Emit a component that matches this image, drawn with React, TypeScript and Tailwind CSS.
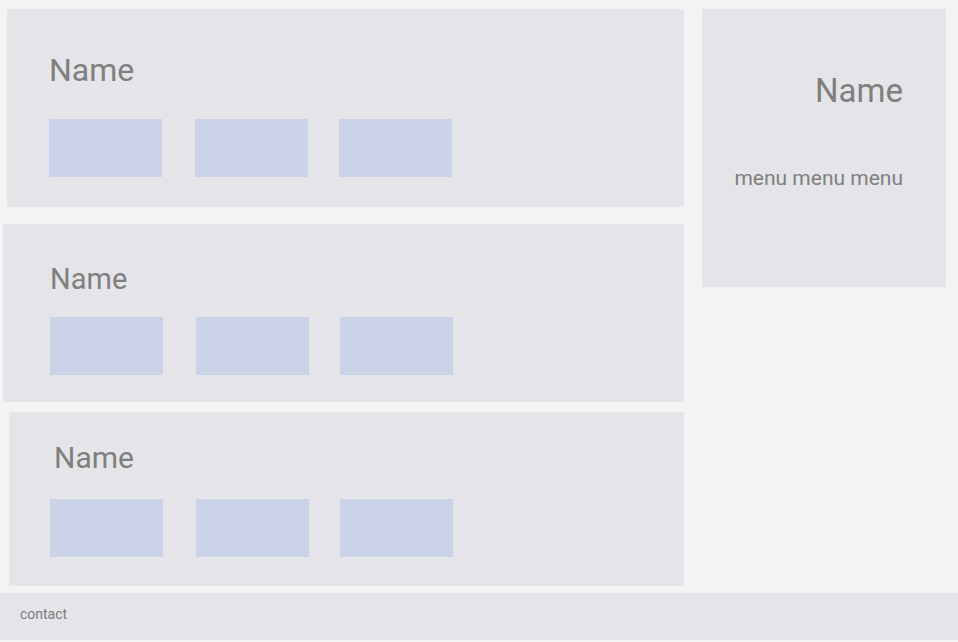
const Boxes = () => (
  <div className="flex">
    <div className="w-[113px] h-[58px] bg-[#c9d2e7]" />
    <div className="w-[113px] h-[58px] bg-[#c9d2e7] ml-[33px]" />
    <div className="w-[113px] h-[58px] bg-[#c9d2e7] ml-[31px]" />
  </div>
);

export default function App() {
  return (
    <div className="h-[642px] bg-[#f3f3f3] flex flex-col font-['Roboto',sans-serif] text-[#7f7f7f]">
      <div className="flex">
        {/* Left column */}
        <div className="flex flex-col">
          <div className="ml-[7px] mt-[9px] w-[677px] h-[198px] bg-[#e5e5e9] pl-[42px] pt-[45px]">
            <h2 className="text-[32px] leading-none">Name</h2>
            <div className="mt-[33px]">
              <Boxes />
            </div>
          </div>

          <div className="ml-[3px] mt-[17px] w-[681px] h-[178px] bg-[#e5e5e9] pl-[47px] pt-[41px]">
            <h2 className="text-[29px] leading-none">Name</h2>
            <div className="mt-[23px]">
              <Boxes />
            </div>
          </div>

          <div className="ml-[9px] mt-[10px] w-[675px] h-[174px] bg-[#e5e5e9] pl-[41px] pt-[31px]">
            <h2 className="text-[30px] leading-none ml-[4px]">Name</h2>
            <div className="mt-[26px]">
              <Boxes />
            </div>
          </div>
        </div>

        {/* Sidebar */}
        <div className="ml-[18px] mt-[9px] w-[244px] h-[278px] bg-[#e5e5e9] pr-[43px] pt-[65px] text-right">
          <h2 className="text-[33px] leading-none">Name</h2>
          <p className="mt-[61px] text-[21px] leading-none">menu menu menu</p>
        </div>
      </div>

      {/* Footer */}
      <div className="mt-[7px] h-[47px] bg-[#e5e5e9] flex items-center pl-[20px] pb-[4px] text-[14px] text-[#7a7a7a]">
        contact
      </div>
    </div>
  );
}
